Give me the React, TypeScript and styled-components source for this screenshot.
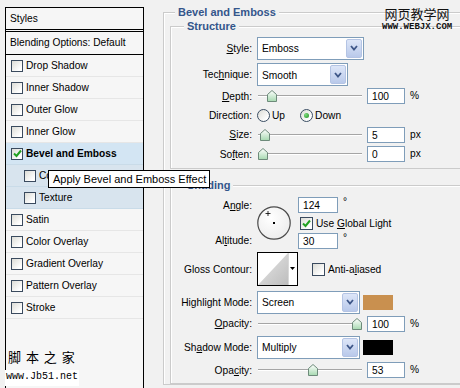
import React from 'react';
import styled, { createGlobalStyle } from 'styled-components';

const GlobalStyle = createGlobalStyle`
  html, body {
    margin: 0;
    padding: 0;
    background: #f1f1f1;
  }
  body {
    width: 460px;
    height: 388px;
    overflow: hidden;
    font-family: "Liberation Sans", Arial, sans-serif;
    font-size: 10.2px;
    color: #000;
  }
`

const Window = styled.div`
  position: relative;
  display: flex;
  width: 460px;
  height: 388px;
  overflow: hidden;
`

/* ---------- left: styles list ---------- */

const StylesPanel = styled.div`
  flex: none;
  width: 137px;
  height: 400px;
  margin: 7px 0 0 5px;
  border: 1px solid #000;
  border-bottom: none;
  background: #f6f6f6;
`
const PanelHeader = styled.div`
  height: 21px;
  line-height: 21px;
  padding-left: 4px;
  border-bottom: 3px double #000;
`
const BlendingRow = styled.div`
  height: 22px;
  line-height: 22px;
  padding-left: 4px;
  border-bottom: 1px solid #000;
`
const StyleRow = styled.div<{ $tint?: string; $indent?: boolean; $bold?: boolean }>`
  display: flex;
  align-items: center;
  gap: 3px;
  height: 21px;
  padding-left: ${p => (p.$indent ? 18 : 5)}px;
  border-bottom: 1px solid ${p => (p.$tint ? '#c9dbe8' : '#e6e6e6')};
  background: ${p => p.$tint ?? 'transparent'};
  font-weight: ${p => (p.$bold ? 700 : 400)};
  white-space: nowrap;
`
const Box = styled.span<{ $size?: number }>`
  flex: none;
  display: inline-flex;
  align-items: center;
  justify-content: center;
  width: ${p => p.$size ?? 12}px;
  height: ${p => p.$size ?? 12}px;
  box-sizing: border-box;
  border: 1px solid #3a4a5e;
  background: linear-gradient(135deg, #dcdcd6, #ffffff 80%);
`

/* ---------- right: bevel and emboss editor ---------- */

const Editor = styled.div`
  flex: none;
  width: 320px;
  margin-left: 19px;
  padding-top: 6px;
`
const Group = styled.fieldset<{ $inner?: boolean; $mt?: number; $pb?: number }>`
  margin: ${p => p.$mt ?? 0}px 0 0 0;
  padding: ${p => (p.$inner ? 2 : 0)}px 0 ${p => p.$pb ?? 0}px ${p => (p.$inner ? 0 : 6)}px;
  border: 1px solid #cbcbcb;
  box-shadow: inset 1px 1px 0 #ffffff;
  min-width: 0;
`
const Legend = styled.legend<{ $inner?: boolean }>`
  margin-left: ${p => (p.$inner ? 13 : 5)}px;
  padding: 0 3px;
  font-size: 11px;
  line-height: 13px;
  font-weight: bold;
  color: #34568b;
  background: #f1f1f1;
`
const Row = styled.div<{ $h: number }>`
  display: flex;
  align-items: center;
  height: ${p => p.$h}px;
  white-space: nowrap;
`
const FieldLabel = styled.span`
  flex: none;
  width: 81px;
  margin-right: 5px;
  text-align: right;
`
const Key = styled.span`
  text-decoration: underline;
`
const Select = styled.div<{ $w: number }>`
  flex: none;
  display: flex;
  align-items: stretch;
  justify-content: space-between;
  width: ${p => p.$w}px;
  height: 23px;
  box-sizing: border-box;
  border: 1px solid #7f9db9;
  background: #fff;
  padding: 1px 1px 1px 4px;
`
const SelectText = styled.span`
  align-self: center;
  padding-top: 1px;
`
const ArrowButton = styled.span`
  width: 14px;
  display: flex;
  align-items: center;
  justify-content: center;
  border: 1px solid #b4c4e4;
  border-radius: 2px;
  background: linear-gradient(#dde6f8, #b9c9ea);
`
const NumberBox = styled.span<{ $w?: number; $ml?: number }>`
  flex: none;
  width: ${p => p.$w ?? 38}px;
  height: 16px;
  margin-left: ${p => p.$ml ?? 5}px;
  box-sizing: border-box;
  border: 1px solid #7f9db9;
  background: #fff;
  padding-left: 4px;
  line-height: 15px;
`
const Unit = styled.span<{ $sup?: boolean }>`
  margin-left: 5px;
  align-self: ${p => (p.$sup ? 'flex-start' : 'center')};
  line-height: ${p => (p.$sup ? 10 : 14)}px;
`
const SliderTrack = styled.div`
  position: relative;
  flex: none;
  width: 104px;
  height: 12px;
  margin-left: 1px;
  &::before {
    content: '';
    position: absolute;
    left: 0;
    right: 0;
    top: 5px;
    border-top: 1px solid #a5a5a5;
    border-bottom: 1px solid #fff;
  }
`
const Thumb = styled.svg`
  position: absolute;
  top: 0;
`
const RadioOption = styled.span<{ $mr?: number }>`
  display: flex;
  align-items: center;
  gap: 2px;
  margin-right: ${p => p.$mr ?? 0}px;
`
const Radio = styled.span<{ $on?: boolean }>`
  flex: none;
  display: inline-flex;
  align-items: center;
  justify-content: center;
  width: 13px;
  height: 13px;
  box-sizing: border-box;
  border: 1px solid #3a4d63;
  border-radius: 50%;
  background: linear-gradient(135deg, #dcdcd6, #fff 80%);
  &::after {
    content: '';
    display: ${p => (p.$on ? 'block' : 'none')};
    width: 5px;
    height: 5px;
    border-radius: 50%;
    background: radial-gradient(circle at 35% 35%, #7fdc7f, #1f8f1f);
  }
`
const AngleBlock = styled.div`
  display: flex;
  align-items: stretch;
  height: 52px;
  margin-top: 3px;
`
const StackedLabels = styled.div`
  flex: none;
  width: 81px;
  margin-right: 5px;
  display: flex;
  flex-direction: column;
  justify-content: space-between;
  text-align: right;
  line-height: 16px;
  padding: 1px 0 0;
`
const DialCell = styled.div`
  flex: none;
  width: 41px;
  display: flex;
  align-items: center;
`
const AngleInputs = styled.div`
  display: flex;
  flex-direction: column;
  gap: 3px;
`
const InlineRow = styled.div<{ $h?: number }>`
  display: flex;
  align-items: center;
  height: ${p => p.$h ?? 14}px;
`
const ContourBox = styled.span`
  flex: none;
  display: flex;
  width: 41px;
  height: 34px;
  box-sizing: border-box;
  border: 1px solid #000;
  background: #fff;
`
const CheckLabel = styled.span<{ $ml?: number }>`
  display: flex;
  align-items: center;
  gap: 3px;
  margin-left: ${p => p.$ml ?? 0}px;
`
const Swatch = styled.span<{ $color: string }>`
  flex: none;
  width: 30px;
  height: 15px;
  margin-left: 3px;
  background: ${p => p.$color};
`

/* ---------- overlays ---------- */

const Tooltip = styled.div`
  position: absolute;
  left: 48px;
  top: 170px;
  width: 162px;
  height: 18px;
  box-sizing: border-box;
  border: 1px solid #000;
  background: #fff;
  padding-left: 4px;
  font-size: 11px;
  line-height: 16px;
  white-space: nowrap;
`
const MarkTop = styled.div`
  position: absolute;
  left: 382px;
  top: 6px;
  text-align: center;
  color: #111;
`
const MarkCjk = styled.div<{ $size: number; $spacing?: number }>`
  font-family: "Noto Sans CJK SC", sans-serif;
  font-size: ${p => p.$size}px;
  line-height: ${p => p.$size + 3}px;
  letter-spacing: ${p => p.$spacing ?? 0}px;
  white-space: pre;
`
const MarkLatin = styled.div<{ $size: number; $bold?: boolean }>`
  font-family: "Liberation Mono", monospace;
  font-size: ${p => p.$size}px;
  line-height: ${p => p.$size + 1}px;
  font-weight: ${p => (p.$bold ? 700 : 400)};
  white-space: nowrap;
`
const MarkBottom = styled.div`
  position: absolute;
  left: 5px;
  top: 349px;
  color: #000;
`
const MarkUrl = styled(MarkLatin)`
  margin-top: 5px;
  padding: 1px 1px 4px 1px;
  background: #fff;
`

const Check = () => (
  <svg width="9" height="9" viewBox="0 0 9 9">
    <path d="M1 4.5 L3.5 7 L8 1.5" fill="none" stroke="#21a121" strokeWidth="2" />
  </svg>
)

const Chevron = () => (
  <svg width="8" height="6" viewBox="0 0 8 6">
    <path d="M1 1 L4 4.5 L7 1" fill="none" stroke="#3d5688" strokeWidth="1.8" />
  </svg>
)

const Slider = ({ value, max }: { value: number; max: number }) => (
  <SliderTrack>
    <Thumb width="10" height="12" viewBox="0 0 10 12" style={{ left: (value / max) * 94 }}>
      <defs>
        <linearGradient id="thumbFill" x1="0" y1="0" x2="0" y2="1">
          <stop offset="0" stopColor="#ffffff" />
          <stop offset="1" stopColor="#a6d9b0" />
        </linearGradient>
      </defs>
      <path d="M0.5 4.5 L5 0.5 L9.5 4.5 L9.5 11.5 L0.5 11.5 Z" fill="url(#thumbFill)" stroke="#6d8a7a" />
    </Thumb>
  </SliderTrack>
)

const Dial = () => (
  <svg width="34" height="34" viewBox="0 0 34 34">
    <defs>
      <radialGradient id="dialFill" cx="0.4" cy="0.35" r="0.7">
        <stop offset="0" stopColor="#ffffff" />
        <stop offset="1" stopColor="#ececec" />
      </radialGradient>
    </defs>
    <circle cx="17" cy="17" r="16.2" fill="url(#dialFill)" stroke="#4a4a4a" strokeWidth="1.2" />
    <path d="M11 5 V10 M8.5 7.5 H13.5" stroke="#000" strokeWidth="0.8" />
    <rect x="16" y="16" width="2" height="2" fill="#000" />
  </svg>
)

const ContourPreview = () => (
  <ContourBox>
    <svg width="39" height="32" viewBox="0 0 39 32">
      <defs>
        <linearGradient id="contourFill" x1="0" y1="0" x2="1" y2="1">
          <stop offset="0" stopColor="#e8e8e8" />
          <stop offset="1" stopColor="#bdbdbd" />
        </linearGradient>
      </defs>
      <polygon points="0,32 30,0 30,32" fill="url(#contourFill)" />
      <line x1="30.5" y1="0" x2="30.5" y2="32" stroke="#d8d8d8" />
      <polygon points="32,14 37,14 34.5,17" fill="#000" />
    </svg>
  </ContourBox>
)

const styleItems = [
  'Drop Shadow',
  'Inner Shadow',
  'Outer Glow',
  'Inner Glow',
]
const lowerItems = ['Satin', 'Color Overlay', 'Gradient Overlay', 'Pattern Overlay', 'Stroke']

export default function App() {
  return (
    <Window>
      <GlobalStyle />
      <StylesPanel>
        <PanelHeader>Styles</PanelHeader>
        <BlendingRow>Blending Options: Default</BlendingRow>
        {styleItems.map(name => (
          <StyleRow key={name}>
            <Box />
            {name}
          </StyleRow>
        ))}
        <StyleRow $tint="#d3e5f3" $bold>
          <Box>
            <Check />
          </Box>
          Bevel and Emboss
        </StyleRow>
        <StyleRow $tint="#d8e4ee" $indent>
          <Box />
          Contour
        </StyleRow>
        <StyleRow $tint="#d8e4ee" $indent>
          <Box />
          Texture
        </StyleRow>
        {lowerItems.map(name => (
          <StyleRow key={name}>
            <Box />
            {name}
          </StyleRow>
        ))}
      </StylesPanel>

      <Editor>
        <Group $pb={0}>
          <Legend>Bevel and Emboss</Legend>
          <Group $inner $mt={1} $pb={3}>
            <Legend $inner>Structure</Legend>
            <Row $h={26}>
              <FieldLabel><Key>S</Key>tyle:</FieldLabel>
              <Select $w={107}>
                <SelectText>Emboss</SelectText>
                <ArrowButton><Chevron /></ArrowButton>
              </Select>
            </Row>
            <Row $h={27}>
              <FieldLabel>Tec<Key>h</Key>nique:</FieldLabel>
              <Select $w={91}>
                <SelectText>Smooth</SelectText>
                <ArrowButton><Chevron /></ArrowButton>
              </Select>
            </Row>
            <Row $h={16}>
              <FieldLabel><Key>D</Key>epth:</FieldLabel>
              <Slider value={100} max={1000} />
              <NumberBox>100</NumberBox>
              <Unit>%</Unit>
            </Row>
            <Row $h={22}>
              <FieldLabel>Direction:</FieldLabel>
              <RadioOption $mr={15}>
                <Radio />
                Up
              </RadioOption>
              <RadioOption>
                <Radio $on />
                Down
              </RadioOption>
            </Row>
            <Row $h={17}>
              <FieldLabel><Key>S</Key>ize:</FieldLabel>
              <Slider value={5} max={250} />
              <NumberBox>5</NumberBox>
              <Unit>px</Unit>
            </Row>
            <Row $h={22}>
              <FieldLabel>So<Key>f</Key>ten:</FieldLabel>
              <Slider value={0} max={16} />
              <NumberBox>0</NumberBox>
              <Unit>px</Unit>
            </Row>
          </Group>

          <Group $inner $mt={10} $pb={5}>
            <Legend $inner>Shading</Legend>
            <AngleBlock>
              <StackedLabels>
                <span>A<Key>n</Key>gle:</span>
                <span>Al<Key>t</Key>itude:</span>
              </StackedLabels>
              <DialCell>
                <Dial />
              </DialCell>
              <AngleInputs>
                <InlineRow $h={16}>
                  <NumberBox $w={40} $ml={0}>124</NumberBox>
                  <Unit $sup>°</Unit>
                </InlineRow>
                <InlineRow>
                  <CheckLabel $ml={2}>
                    <Box $size={13}>
                      <Check />
                    </Box>
                    <span>Use <Key>G</Key>lobal Light</span>
                  </CheckLabel>
                </InlineRow>
                <InlineRow $h={16}>
                  <NumberBox $w={40} $ml={0}>30</NumberBox>
                  <Unit $sup>°</Unit>
                </InlineRow>
              </AngleInputs>
            </AngleBlock>
            <Row $h={40}>
              <FieldLabel>Gloss Contour:</FieldLabel>
              <ContourPreview />
              <CheckLabel $ml={14}>
                <Box $size={13} />
                <span>Anti-a<Key>l</Key>iased</span>
              </CheckLabel>
            </Row>
            <Row $h={26}>
              <FieldLabel>Highlight Mode:</FieldLabel>
              <Select $w={103}>
                <SelectText>Screen</SelectText>
                <ArrowButton><Chevron /></ArrowButton>
              </Select>
              <Swatch $color="#c9904f" />
            </Row>
            <Row $h={17}>
              <FieldLabel><Key>O</Key>pacity:</FieldLabel>
              <Slider value={100} max={100} />
              <NumberBox>100</NumberBox>
              <Unit>%</Unit>
            </Row>
            <Row $h={30}>
              <FieldLabel>Sh<Key>a</Key>dow Mode:</FieldLabel>
              <Select $w={103}>
                <SelectText>Multiply</SelectText>
                <ArrowButton><Chevron /></ArrowButton>
              </Select>
              <Swatch $color="#000000" />
            </Row>
            <Row $h={16}>
              <FieldLabel>Opa<Key>c</Key>ity:</FieldLabel>
              <Slider value={53} max={100} />
              <NumberBox>53</NumberBox>
              <Unit>%</Unit>
            </Row>
          </Group>
        </Group>
      </Editor>

      <Tooltip>Apply Bevel and Emboss Effect</Tooltip>

      <MarkTop>
        <MarkCjk $size={13}>网页教学网</MarkCjk>
        <MarkLatin $size={9} $bold>WWW.WEBJX.COM</MarkLatin>
      </MarkTop>

      <MarkBottom>
        <MarkCjk $size={13} $spacing={1} style={{ paddingLeft: 3 }}>脚 本 之 家</MarkCjk>
        <MarkUrl $size={10}>www.Jb51.net</MarkUrl>
      </MarkBottom>
    </Window>
  )
}
